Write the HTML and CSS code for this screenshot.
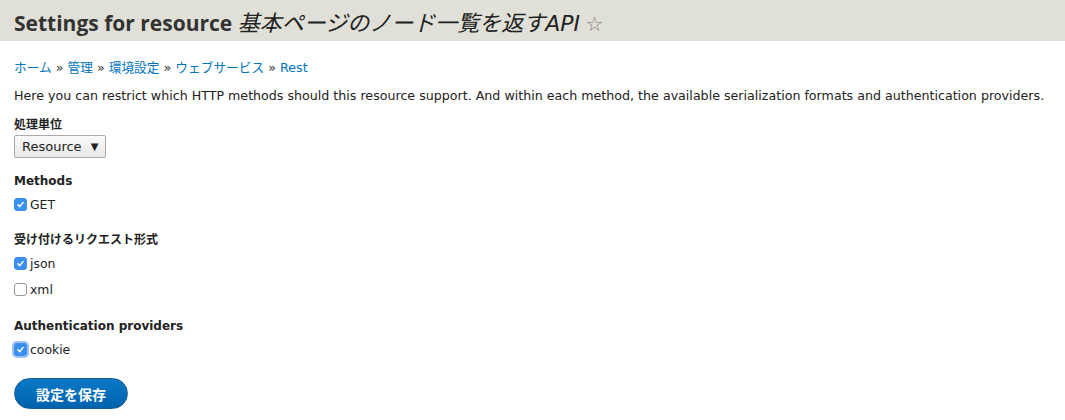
FILE: index.html
```html
<!DOCTYPE html>
<html lang="ja">
<head>
<meta charset="utf-8">
<link rel="stylesheet" href="styles.css">
</head>
<body>
<header class="page-head">
  <h1 class="title">Settings for resource <em>基本ページのノード一覧を返すAPI</em> <span class="star">☆</span></h1>
</header>
<main class="content">
  <nav class="breadcrumb"><a>ホーム</a> » <a>管理</a> » <a>環境設定</a> » <a>ウェブサービス</a> » <a>Rest</a></nav>
  <p class="desc">Here you can restrict which HTTP methods should this resource support. And within each method, the available serialization formats and authentication providers.</p>

  <div class="field">
    <div class="label">処理単位</div>
    <div class="select">Resource <span class="arrow">▼</span></div>
  </div>

  <div class="field">
    <div class="label">Methods</div>
    <div class="check"><span class="box on"><svg viewBox="0 0 12 12" width="12" height="12"><path d="M3.2 6.3 L5.2 8.3 L8.8 3.8" fill="none" stroke="#fff" stroke-width="1.6" stroke-linecap="round" stroke-linejoin="round"/></svg></span>GET</div>
  </div>

  <div class="field">
    <div class="label">受け付けるリクエスト形式</div>
    <div class="check"><span class="box on"><svg viewBox="0 0 12 12" width="12" height="12"><path d="M3.2 6.3 L5.2 8.3 L8.8 3.8" fill="none" stroke="#fff" stroke-width="1.6" stroke-linecap="round" stroke-linejoin="round"/></svg></span>json</div>
    <div class="check"><span class="box"></span>xml</div>
  </div>

  <div class="field">
    <div class="label">Authentication providers</div>
    <div class="check"><span class="box on focus"><svg viewBox="0 0 12 12" width="12" height="12"><path d="M3.2 6.3 L5.2 8.3 L8.8 3.8" fill="none" stroke="#fff" stroke-width="1.6" stroke-linecap="round" stroke-linejoin="round"/></svg></span>cookie</div>
  </div>

  <div class="actions"><button class="btn">設定を保存</button></div>
</main>
</body>
</html>
```
FILE: styles.css
```css
html, body {
  margin: 0;
  padding: 0;
  background: #fff;
}
body {
  font-family: "DejaVu Sans", "Noto Sans CJK JP", sans-serif;
  font-size: 13px;
  color: #333;
}
.page-head {
  background: #e0e0d8;
  height: 41px;
  padding: 0 14px;
  display: flex;
  align-items: center;
}
.title {
  margin: 0;
  font-family: "Open Sans", "Noto Sans CJK JP", sans-serif;
  font-size: 21px;
  font-weight: bold;
  color: #333;
  white-space: nowrap;
}
.title em {
  font-family: "DejaVu Sans", "Noto Sans CJK JP", sans-serif;
  font-size: 22px;
  font-weight: normal;
  font-style: italic;
  color: #222;
}
.star {
  font-family: "DejaVu Sans", sans-serif;
  font-weight: normal;
  color: #8a7b70;
  font-size: 20px;
}
.content {
  padding: 17px 14px 0;
}
.breadcrumb {
  color: #333;
  height: 20px;
  line-height: 20px;
  font-size: 12.7px;
}
.breadcrumb a {
  color: #0074bd;
}
.desc {
  margin: 8px 0 0;
  line-height: 20px;
  font-size: 12.65px;
  color: #222;
}
.field {
  margin-top: 13px;
}
.field:first-of-type {
  margin-top: 9px;
}
.field:nth-of-type(4) {
  margin-top: 14px;
}
.label {
  font-weight: bold;
  line-height: 20px;
  color: #222;
  font-size: 12px;
}
.select {
  display: inline-flex;
  align-items: center;
  margin-top: 0;
  height: 21px;
  padding: 0 7px;
  border: 1px solid #aaa;
  border-radius: 2px;
  background: linear-gradient(#fafafa, #e8e8e8);
  font-size: 13px;
  color: #222;
}
.select .arrow {
  font-size: 10px;
  margin-left: 9px;
}
.check {
  display: flex;
  align-items: center;
  height: 26px;
  color: #222;
  font-size: 12.4px;
}
.box {
  width: 13px;
  height: 13px;
  border-radius: 3px;
  border: 1px solid #999;
  background: #fff;
  box-sizing: border-box;
  margin-right: 3px;
  display: inline-flex;
  align-items: center;
  justify-content: center;
}
.box.on {
  background: #3b8fef;
  border-color: #3b8fef;
}
.box svg {
  width: 11px;
  height: 11px;
}
.box.focus {
  box-shadow: 0 0 0 2px #9cc2f2;
}
.actions {
  margin-top: 16px;
}
.btn {
  width: 114px;
  height: 31px;
  border-radius: 16px;
  border: 1px solid #1e5c90;
  background: linear-gradient(#0a79c7, #0062ad);
  color: #fff;
  font-family: "Noto Sans CJK JP", sans-serif;
  font-size: 14px;
  font-weight: bold;
  padding: 0;
}
```
